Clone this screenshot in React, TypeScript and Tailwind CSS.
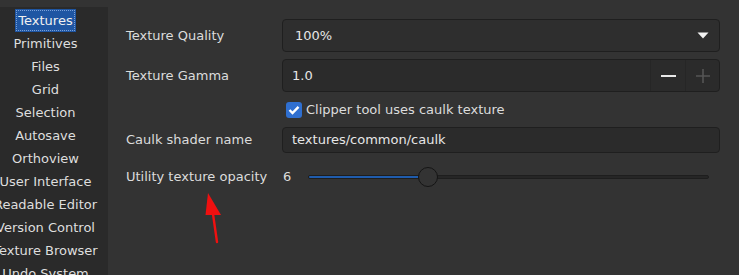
import { useState } from "react";

const pages = [
  "Textures",
  "Primitives",
  "Files",
  "Grid",
  "Selection",
  "Autosave",
  "Orthoview",
  "User Interface",
  "Readable Editor",
  "Version Control",
  "Texture Browser",
  "Undo System",
];

function Sidebar() {
  return (
    <div className="w-[108px] shrink-0 bg-[#2a2a2a] overflow-hidden mt-[7px]">
      <div className="w-[91px] flex flex-col items-center pt-[2px]">
        {pages.map((p, i) => (
          <div
            key={p}
            className={
              i === 0
                ? "h-[23px] px-[3px] flex items-center whitespace-nowrap bg-[#1f56a3] outline outline-1 outline-dotted outline-[#7aa0d8] -outline-offset-2 text-[#f0f0f0]"
                : "h-[23px] px-[3px] flex items-center whitespace-nowrap text-[#dedede]"
            }
          >
            {p}
          </div>
        ))}
      </div>
    </div>
  );
}

function Label({ text }: { text: string }) {
  return <div className="w-[156px] shrink-0 text-[#dcdcdc] whitespace-nowrap">{text}</div>;
}

function Row({ children, className }: { children: React.ReactNode; className: string }) {
  return <div className={"flex items-center " + className}>{children}</div>;
}

export default function App() {
  const [checked, setChecked] = useState(true);
  return (
    <div
      className="w-[739px] h-[275px] bg-[#333333] flex overflow-hidden text-[13px] relative"
      style={{ fontFamily: '"DejaVu Sans", sans-serif' }}
    >
      <Sidebar />
      <div className="flex-1 flex flex-col pl-[18px] pr-[19px] pt-[19px]">
        <Row className="h-[33px]">
          <Label text="Texture Quality" />
          <div className="flex-1 h-full rounded-[4px] border border-[#1f1f1f] bg-[#2e2e2e] flex items-center pl-[12px] pr-[10px] text-[#e6e6e6]">
            <span className="flex-1">100%</span>
            <svg width="12" height="7" viewBox="0 0 12 7">
              <path d="M0.5 0.5 L11.5 0.5 L6 6.5 Z" fill="#f2f2f2" />
            </svg>
          </div>
        </Row>
        <Row className="h-[33px] mt-[7px]">
          <Label text="Texture Gamma" />
          <div className="flex-1 h-full rounded-[4px] border border-[#1f1f1f] bg-[#2b2b2b] flex items-stretch text-[#e6e6e6]">
            <span className="flex-1 flex items-center pl-[9px]">1.0</span>
            <div className="w-[35px] border-l border-[#262626] flex items-center justify-center">
              <div className="w-[15px] h-[2px] bg-[#e8e8e8]" />
            </div>
            <div className="w-[34px] border-l border-[#262626] flex items-center justify-center">
              <svg width="14" height="14" viewBox="0 0 14 14">
                <path d="M7 0 V14 M0 7 H14" stroke="#555555" strokeWidth="1.6" />
              </svg>
            </div>
          </div>
        </Row>
        <Row className="h-[22px] mt-[7px]">
          <div className="w-[160px] shrink-0" />
          <button
            onClick={() => setChecked(!checked)}
            className="w-[16px] h-[16px] rounded-[3px] bg-[#2f6fd0] flex items-center justify-center"
          >
            {checked && (
              <svg width="12" height="10" viewBox="0 0 12 10">
                <path d="M1.5 5 L4.5 8 L10.5 1.8" stroke="white" strokeWidth="2.4" fill="none" />
              </svg>
            )}
          </button>
          <span className="ml-[4px] text-[#dcdcdc] whitespace-nowrap">Clipper tool uses caulk texture</span>
        </Row>
        <Row className="h-[26px] mt-[6px]">
          <Label text="Caulk shader name" />
          <div className="flex-1 h-full rounded-[4px] border border-[#1f1f1f] bg-[#2b2b2b] flex items-center pl-[9px] text-[#e6e6e6]">
            textures/common/caulk
          </div>
        </Row>
        <Row className="h-[24px] mt-[12px]">
          <Label text="Utility texture opacity" />
          <span className="w-[26px] shrink-0 pl-[1px] text-[#dcdcdc]">6</span>
          <div className="flex-1 mr-[11px] relative h-full flex items-center">
            <div className="w-full h-[4px] rounded-full bg-[#262626] border border-[#1e1e1e] overflow-hidden">
              <div className="h-full w-[110px] bg-[#1f5cad]" />
            </div>
            <div className="absolute left-[110px] top-[2px] w-[20px] h-[20px] rounded-full bg-[#333333] border border-[#151515]" />
          </div>
        </Row>
      </div>
      <svg className="absolute left-[200px] top-[190px]" width="24" height="56" viewBox="0 0 24 56">
        <path d="M8 3 L5.5 25 L21 25 Z" fill="#f01010" />
        <path d="M13 24 L17 52" stroke="#f01010" strokeWidth="2.4" strokeLinecap="round" />
      </svg>
    </div>
  );
}
